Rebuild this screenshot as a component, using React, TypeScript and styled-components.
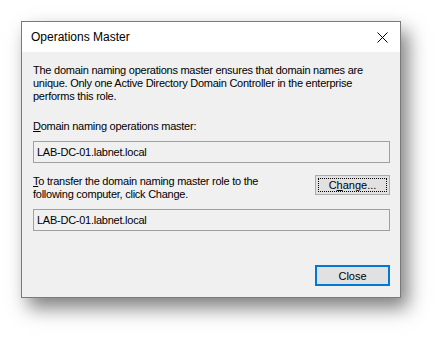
import React from "react";
import styled, { createGlobalStyle } from "styled-components";

const Global = createGlobalStyle`
  html, body { margin: 0; padding: 0; background: #ffffff; }
  body { font-family: "Liberation Sans", Arial, sans-serif; }
`;

const Stage = styled.div`
  width: 443px;
  height: 340px;
  padding: 21px 0 0 21px;
  box-sizing: border-box;
`;

const Window = styled.div`
  width: 380px;
  height: 277px;
  box-sizing: border-box;
  border: 1px solid #7a7a7a;
  background: #f0f0f0;
  display: flex;
  flex-direction: column;
  box-shadow: 7px 10px 18px rgba(0, 0, 0, 0.5);
`;

const TitleBar = styled.div`
  height: 30px;
  background: #ffffff;
  display: flex;
  align-items: center;
  justify-content: space-between;
  padding: 0 10px 0 9px;
  flex-shrink: 0;
`;

const Title = styled.span`
  font-size: 12px;
  color: #000;
`;

const CloseX = styled.svg`
  width: 11px;
  height: 11px;
  margin-right: 2px;
`;

const Body = styled.div`
  flex: 1;
  display: flex;
  flex-direction: column;
  padding: 12px 10px 11px 11px;
  font-size: 11px;
  letter-spacing: -0.25px;
  color: #000;
`;

const Para = styled.p<{ $mt?: number }>`
  margin: ${(p) => p.$mt ?? 0}px 0 0 0;
  line-height: 13px;
`;

const Label = styled.div<{ $mt: number }>`
  margin-top: ${(p) => p.$mt}px;
  line-height: 13px;
`;

const TextBox = styled.div<{ $mt: number }>`
  margin-top: ${(p) => p.$mt}px;
  height: 22px;
  box-sizing: border-box;
  border: 1px solid #a0a0a0;
  background: #f0f0f0;
  display: flex;
  align-items: center;
  padding: 0 3px;
`;

const TransferRow = styled.div`
  margin-top: 12px;
  display: flex;
  justify-content: space-between;
  align-items: flex-start;
`;

const Button = styled.button<{ $default?: boolean }>`
  width: 75px;
  height: ${(p) => (p.$default ? 21 : 20)}px;
  box-sizing: border-box;
  background: #e1e1e1;
  border: ${(p) => (p.$default ? "2px solid #0078d7" : "1px solid #adadad")};
  font-family: "Liberation Sans", Arial, sans-serif;
  font-size: 11px;
  color: #000;
  padding: 0;
  display: flex;
  align-items: center;
  justify-content: center;
`;

const Focus = styled.span`
  display: flex;
  align-items: center;
  justify-content: center;
  width: calc(100% - 4px);
  height: calc(100% - 4px);
  border: 1px dotted #000;
  box-sizing: border-box;
`;

const Footer = styled.div`
  margin-top: auto;
  display: flex;
  justify-content: flex-end;
`;

const U = styled.span`
  text-decoration: underline;
`;

export default function App() {
  return (
    <>
      <Global />
      <Stage>
        <Window>
          <TitleBar>
            <Title>Operations Master</Title>
            <CloseX viewBox="0 0 11 11">
              <path d="M0.5 0.5 L10.5 10.5 M10.5 0.5 L0.5 10.5" stroke="#000" strokeWidth="1" />
            </CloseX>
          </TitleBar>
          <Body>
            <Para>
              The domain naming operations master ensures that domain names are
              unique. Only one Active Directory Domain Controller in the enterprise
              performs this role.
            </Para>
            <Label $mt={17}>
              <U>D</U>omain naming operations master:
            </Label>
            <TextBox $mt={8}>LAB-DC-01.labnet.local</TextBox>
            <TransferRow>
              <Para>
                <U>T</U>o transfer the domain naming master role to the
                <br />
                following computer, click Change.
              </Para>
              <Button>
                <Focus>
                  C<U>h</U>ange...
                </Focus>
              </Button>
            </TransferRow>
            <TextBox $mt={8}>LAB-DC-01.labnet.local</TextBox>
            <Footer>
              <Button $default>Close</Button>
            </Footer>
          </Body>
        </Window>
      </Stage>
    </>
  );
}
